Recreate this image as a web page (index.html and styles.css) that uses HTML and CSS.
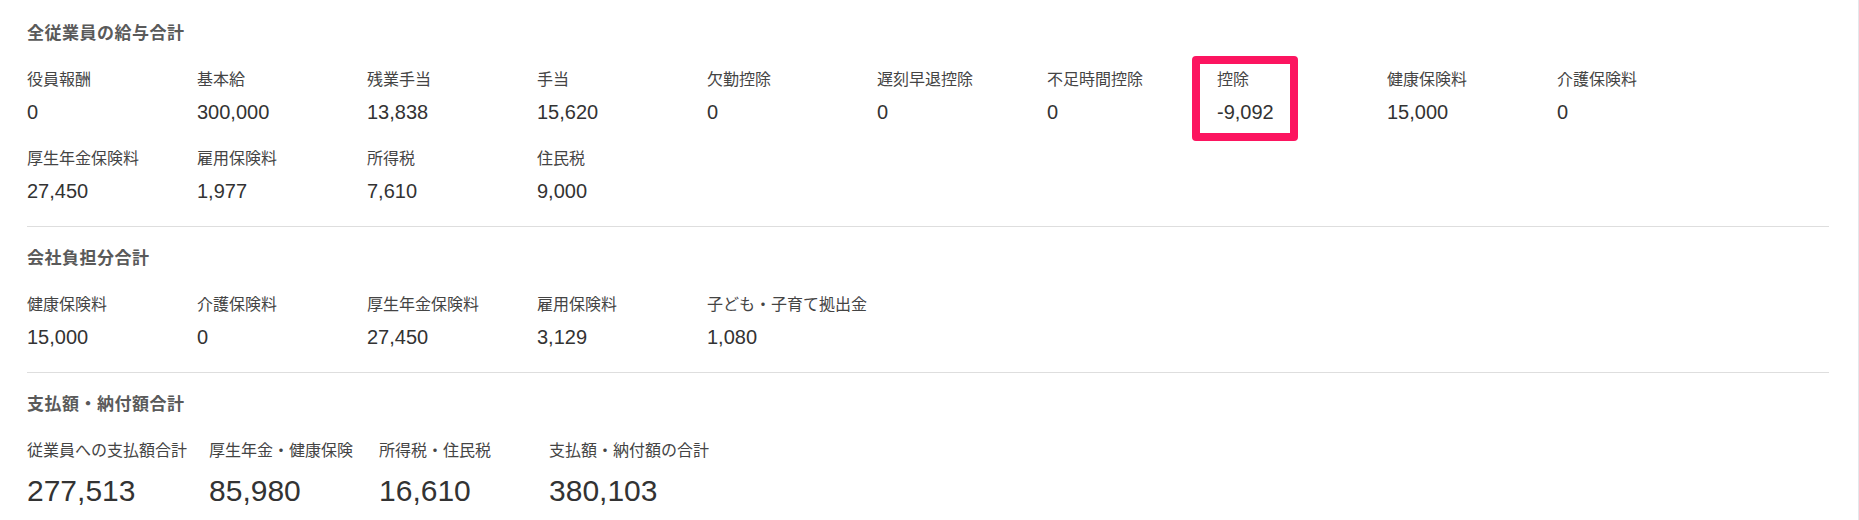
FILE: index.html
```html
<!doctype html>
<html lang="ja">
  <head>
    <meta charset="UTF-8" />
    <meta name="viewport" content="width=device-width, initial-scale=1.0" />
    <title>給与合計</title>
    <link rel="stylesheet" href="styles.css">
  </head>
  <body>
    <div class="panel">
      <section class="summary">
        <h2 class="summary-title">全従業員の給与合計</h2>
        <div class="item-list">
          <div class="item"><div class="item-label">役員報酬</div><div class="item-value">0</div></div>
          <div class="item"><div class="item-label">基本給</div><div class="item-value">300,000</div></div>
          <div class="item"><div class="item-label">残業手当</div><div class="item-value">13,838</div></div>
          <div class="item"><div class="item-label">手当</div><div class="item-value">15,620</div></div>
          <div class="item"><div class="item-label">欠勤控除</div><div class="item-value">0</div></div>
          <div class="item"><div class="item-label">遅刻早退控除</div><div class="item-value">0</div></div>
          <div class="item"><div class="item-label">不足時間控除</div><div class="item-value">0</div></div>
          <div class="item highlight">
            <div class="item-label">控除</div><div class="item-value">-9,092</div>
            <span class="mark"></span>
          </div>
          <div class="item"><div class="item-label">健康保険料</div><div class="item-value">15,000</div></div>
          <div class="item"><div class="item-label">介護保険料</div><div class="item-value">0</div></div>
          <div class="item"><div class="item-label">厚生年金保険料</div><div class="item-value">27,450</div></div>
          <div class="item"><div class="item-label">雇用保険料</div><div class="item-value">1,977</div></div>
          <div class="item"><div class="item-label">所得税</div><div class="item-value">7,610</div></div>
          <div class="item"><div class="item-label">住民税</div><div class="item-value">9,000</div></div>
        </div>
      </section>

      <section class="summary">
        <h2 class="summary-title">会社負担分合計</h2>
        <div class="item-list">
          <div class="item"><div class="item-label">健康保険料</div><div class="item-value">15,000</div></div>
          <div class="item"><div class="item-label">介護保険料</div><div class="item-value">0</div></div>
          <div class="item"><div class="item-label">厚生年金保険料</div><div class="item-value">27,450</div></div>
          <div class="item"><div class="item-label">雇用保険料</div><div class="item-value">3,129</div></div>
          <div class="item"><div class="item-label">子ども・子育て拠出金</div><div class="item-value">1,080</div></div>
        </div>
      </section>

      <section class="summary last">
        <h2 class="summary-title">支払額・納付額合計</h2>
        <div class="item-list large">
          <div class="item wide"><div class="item-label">従業員への支払額合計</div><div class="item-value">277,513</div></div>
          <div class="item"><div class="item-label">厚生年金・健康保険</div><div class="item-value">85,980</div></div>
          <div class="item"><div class="item-label">所得税・住民税</div><div class="item-value">16,610</div></div>
          <div class="item"><div class="item-label">支払額・納付額の合計</div><div class="item-value">380,103</div></div>
        </div>
      </section>
    </div>
  </body>
</html>
```

FILE: styles.css
```css
body {
  margin: 0;
  background: #fff;
  font-family: "Liberation Sans", "Noto Sans CJK JP", sans-serif;
  color: #333;
}
.panel {
  padding: 2px 29px 0 27px;
  height: 518px;
  border-right: 1px solid #e4e7eb;
}
.summary {
  padding: 20px 0 21px;
  border-bottom: 1px solid #dedede;
}
.summary.last {
  border-bottom: none;
}
.summary-title {
  margin: 0 0 23px;
  font-size: 17px;
  line-height: 24px;
  font-weight: bold;
  letter-spacing: 0.5px;
  color: #5a5a5a;
}
.item-list {
  display: flex;
  flex-wrap: wrap;
  row-gap: 22px;
}
.item {
  position: relative;
  min-width: 150px;
  margin-right: 20px;
}
.item.wide {
  margin-right: 22px;
}
.item-label {
  font-size: 16px;
  line-height: 22px;
  color: #444;
  white-space: nowrap;
  margin-bottom: 7px;
}
.item-value {
  font-size: 20px;
  line-height: 28px;
  color: #333;
}
.large .item-label {
  margin-bottom: 9px;
}
.large .item-value {
  font-size: 30px;
  line-height: 40px;
}
.mark {
  position: absolute;
  left: -25px;
  top: -13px;
  width: 106px;
  height: 85px;
  box-sizing: border-box;
  border: 8px solid #fc1560;
  border-radius: 4px;
}
```
